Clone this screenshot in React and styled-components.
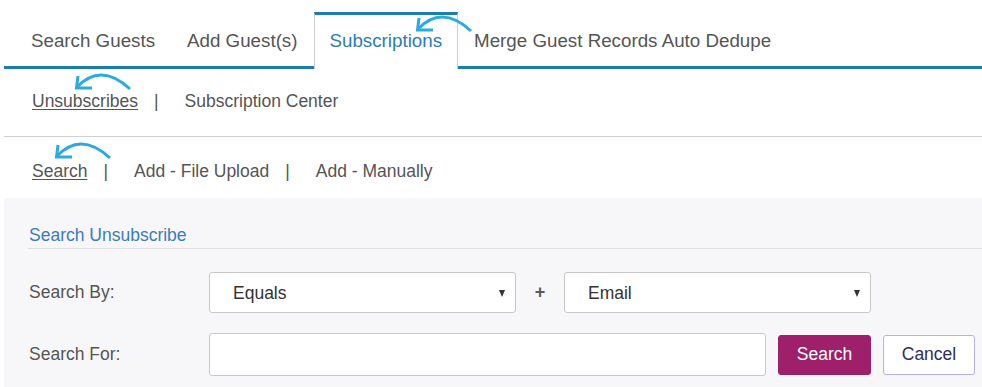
import React from "react";
import styled, { createGlobalStyle } from "styled-components";

const GlobalStyle = createGlobalStyle`
  html, body { margin: 0; padding: 0; background: #fff; }
  body {
    font-family: "Liberation Sans", Arial, sans-serif;
    color: #555;
  }
  * { box-sizing: border-box; }
`;

const Page = styled.div`
  position: relative;
  padding: 12px 0 0 4px;
  overflow: hidden;
  height: 387px;
`;

const TabBar = styled.nav`
  display: flex;
  align-items: flex-start;
  padding-left: 11px;
  border-bottom: 3px solid #1b7db0;
  box-sizing: content-box;
  height: 54px;
`;

const Tab = styled.div`
  height: ${(p) => (p.$active ? "57px" : "54px")};
  padding: 0 15px;
  line-height: 51px;
  font-size: 18.75px;
  white-space: nowrap;
  cursor: pointer;
  color: ${(p) => (p.$active ? "#2b7db5" : "#555")};
  background: ${(p) => (p.$active ? "#fff" : "transparent")};
  border-top: 3px solid ${(p) => (p.$active ? "#1b7db0" : "transparent")};
  border-left: 1px solid ${(p) => (p.$active ? "#cfcfcf" : "transparent")};
  border-right: 1px solid ${(p) => (p.$active ? "#cfcfcf" : "transparent")};
  position: relative;
  z-index: 1;
`;

const SubNav = styled.div`
  display: flex;
  align-items: center;
  padding: ${(p) => p.$pad};
  padding-left: 28px;
  font-size: 17.5px;
  line-height: 20px;
  border-bottom: ${(p) => (p.$divider ? "1px solid #d0d0d0" : "none")};
`;

const NavLink = styled.span`
  color: #555;
  text-decoration: ${(p) => (p.$active ? "underline" : "none")};
  text-underline-offset: 2px;
  cursor: pointer;
  white-space: nowrap;
`;

const Sep = styled.span`
  margin: 0 26px 0 16px;
  color: #555;
`;

const Panel = styled.section`
  background: #f7f7f9;
  padding: 27px 0 20px 24px;
  min-height: 200px;
`;

const PanelTitle = styled.h3`
  margin: 0 0 23px;
  font-weight: normal;
  font-size: 17.5px;
  line-height: 20px;
  color: #3a7cbd;
  padding: 0 0 3px 1px;
  border-bottom: 1px solid #e0e0e3;
`;

const FormRow = styled.div`
  display: flex;
  align-items: center;
  margin-bottom: 20px;
`;

const Label = styled.label`
  width: 181px;
  padding-left: 1px;
  font-size: 17.5px;
  color: #555;
`;

const SelectWrap = styled.div`
  position: relative;
  width: 307px;
  height: 41px;
  background: #fff;
  border: 1px solid #c8c8c8;
  border-radius: 3px;
  &::after {
    content: "";
    position: absolute;
    right: 10px;
    top: 17px;
    border-left: 3.5px solid transparent;
    border-right: 3.5px solid transparent;
    border-top: 7px solid #333;
    pointer-events: none;
  }
`;

const Select = styled.select`
  appearance: none;
  -webkit-appearance: none;
  width: 100%;
  height: 100%;
  border: none;
  background: transparent;
  padding: 0 24px 0 23px;
  font-family: inherit;
  font-size: 17.5px;
  color: #333;
  outline: none;
`;

const Plus = styled.span`
  width: 48px;
  text-align: center;
  font-size: 18px;
  font-weight: bold;
  color: #5a5a5a;
`;

const TextInput = styled.input`
  width: 557px;
  height: 43px;
  border: 1px solid #c8c8c8;
  border-radius: 3px;
  background: #fff;
  font-family: inherit;
  font-size: 17.5px;
  padding: 0 12px;
  outline: none;
`;

const Button = styled.button`
  margin-left: 12px;
  height: 40px;
  width: ${(p) => p.$w}px;
  font-family: inherit;
  font-size: 17.5px;
  border-radius: 3px;
  cursor: pointer;
  background: ${(p) => (p.$primary ? "#9e1f6a" : "#fff")};
  color: ${(p) => (p.$primary ? "#fff" : "#2e2e5c")};
  border: 1px solid ${(p) => (p.$primary ? "#9e1f6a" : "#b9aeea")};
`;

const ArrowSvg = styled.svg`
  position: absolute;
  overflow: visible;
  pointer-events: none;
  z-index: 5;
`;

function Arrow({ left, top }) {
  return (
    <ArrowSvg width="60" height="22" viewBox="0 0 60 22" style={{ left, top }}>
      <g fill="none" stroke="#29abe2" strokeWidth="3">
        <path d="M4 15 Q28 -10 57 17" />
        <path d="M5 4 L3.5 16 L19 16" />
      </g>
    </ArrowSvg>
  );
}

export default function App() {
  return (
    <>
      <GlobalStyle />
      <Page>
        <TabBar>
          <Tab>Search Guests</Tab>
          <Tab>Add Guest(s)</Tab>
          <Tab $active>Subscriptions</Tab>
          <Tab>Merge Guest Records Auto Dedupe</Tab>
        </TabBar>
        <SubNav $pad="22px 0 25px" $divider>
          <NavLink $active>Unsubscribes</NavLink>
          <Sep>|</Sep>
          <NavLink>Subscription Center</NavLink>
        </SubNav>
        <SubNav $pad="24px 0 17px">
          <NavLink $active>Search</NavLink>
          <Sep>|</Sep>
          <NavLink>Add - File Upload</NavLink>
          <Sep>|</Sep>
          <NavLink>Add - Manually</NavLink>
        </SubNav>
        <Panel>
          <PanelTitle>Search Unsubscribe</PanelTitle>
          <FormRow>
            <Label>Search By:</Label>
            <SelectWrap>
              <Select defaultValue="equals">
                <option value="equals">Equals</option>
                <option value="contains">Contains</option>
              </Select>
            </SelectWrap>
            <Plus>+</Plus>
            <SelectWrap>
              <Select defaultValue="email">
                <option value="email">Email</option>
                <option value="name">Name</option>
              </Select>
            </SelectWrap>
          </FormRow>
          <FormRow>
            <Label>Search For:</Label>
            <TextInput type="text" />
            <Button $primary $w={93}>Search</Button>
            <Button $w={92}>Cancel</Button>
          </FormRow>
        </Panel>
        <Arrow left={414} top={14} />
        <Arrow left={73} top={72} />
        <Arrow left={53} top={141} />
      </Page>
    </>
  );
}
